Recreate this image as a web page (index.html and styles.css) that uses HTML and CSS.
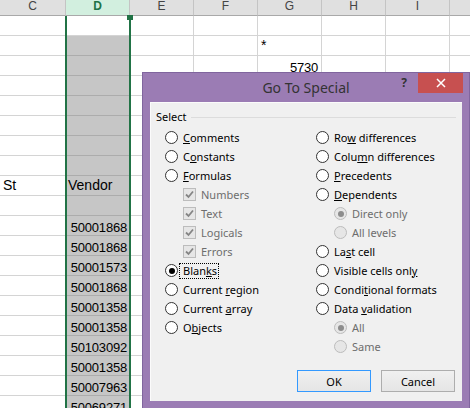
FILE: index.html
```html
<!DOCTYPE html>
<html>
<head>
<meta charset="utf-8">
<link rel="stylesheet" href="styles.css">
</head>
<body>
<div class="sheet">
  <div class="c h">C</div><div class="c h hd">D</div><div class="c h">E</div><div class="c h">F</div><div class="c h">G</div><div class="c h">H</div><div class="c h">I</div><div class="c h"></div>

  <div class="c"></div><div class="c"></div><div class="c"></div><div class="c"></div><div class="c"></div><div class="c"></div><div class="c"></div><div class="c"></div>
  <div class="c"></div><div class="c s"></div><div class="c"></div><div class="c"></div><div class="c pl">*</div><div class="c"></div><div class="c"></div><div class="c"></div>
  <div class="c"></div><div class="c s"></div><div class="c"></div><div class="c"></div><div class="c num">5730</div><div class="c"></div><div class="c"></div><div class="c"></div>
  <div class="c"></div><div class="c s"></div><div class="c"></div><div class="c"></div><div class="c"></div><div class="c"></div><div class="c"></div><div class="c"></div>
  <div class="c"></div><div class="c s"></div><div class="c"></div><div class="c"></div><div class="c"></div><div class="c"></div><div class="c"></div><div class="c"></div>
  <div class="c"></div><div class="c s"></div><div class="c"></div><div class="c"></div><div class="c"></div><div class="c"></div><div class="c"></div><div class="c"></div>
  <div class="c"></div><div class="c s"></div><div class="c"></div><div class="c"></div><div class="c"></div><div class="c"></div><div class="c"></div><div class="c"></div>
  <div class="c"></div><div class="c s"></div><div class="c"></div><div class="c"></div><div class="c"></div><div class="c"></div><div class="c"></div><div class="c"></div>
  <div class="c pl">St</div><div class="c s">Vendor</div><div class="c"></div><div class="c"></div><div class="c"></div><div class="c"></div><div class="c"></div><div class="c"></div>
  <div class="c"></div><div class="c s"></div><div class="c"></div><div class="c"></div><div class="c"></div><div class="c"></div><div class="c"></div><div class="c"></div>
  <div class="c"></div><div class="c s num">50001868</div><div class="c"></div><div class="c"></div><div class="c"></div><div class="c"></div><div class="c"></div><div class="c"></div>
  <div class="c"></div><div class="c s num">50001868</div><div class="c"></div><div class="c"></div><div class="c"></div><div class="c"></div><div class="c"></div><div class="c"></div>
  <div class="c"></div><div class="c s num">50001573</div><div class="c"></div><div class="c"></div><div class="c"></div><div class="c"></div><div class="c"></div><div class="c"></div>
  <div class="c"></div><div class="c s num">50001868</div><div class="c"></div><div class="c"></div><div class="c"></div><div class="c"></div><div class="c"></div><div class="c"></div>
  <div class="c"></div><div class="c s num">50001358</div><div class="c"></div><div class="c"></div><div class="c"></div><div class="c"></div><div class="c"></div><div class="c"></div>
  <div class="c"></div><div class="c s num">50001358</div><div class="c"></div><div class="c"></div><div class="c"></div><div class="c"></div><div class="c"></div><div class="c"></div>
  <div class="c"></div><div class="c s num">50103092</div><div class="c"></div><div class="c"></div><div class="c"></div><div class="c"></div><div class="c"></div><div class="c"></div>
  <div class="c"></div><div class="c s num">50001358</div><div class="c"></div><div class="c"></div><div class="c"></div><div class="c"></div><div class="c"></div><div class="c"></div>
  <div class="c"></div><div class="c s num">50007963</div><div class="c"></div><div class="c"></div><div class="c"></div><div class="c"></div><div class="c"></div><div class="c"></div>
  <div class="c"></div><div class="c s num">50069271</div><div class="c"></div><div class="c"></div><div class="c"></div><div class="c"></div><div class="c"></div><div class="c"></div>
</div>
<div class="selection"></div>
<div class="handle"></div>

<div class="dialog">
  <div class="titlebar">
    <div></div>
    <div class="title">Go To Special</div>
    <div class="controls">
      <span class="help">?</span>
      <span class="close"><svg width="10" height="10" viewBox="0 0 10 10"><path d="M1 1L9 9M9 1L1 9" stroke="#fff" stroke-width="1.5" fill="none"/></svg></span>
    </div>
  </div>
  <div class="panel">
    <div class="legend"><span>Select</span><span class="rule"></span></div>
    <div class="cols">
      <div class="col">
        <div class="opt"><span class="radio"></span><span class="lbl"><u>C</u>omments</span></div>
        <div class="opt"><span class="radio"></span><span class="lbl">C<u>o</u>nstants</span></div>
        <div class="opt"><span class="radio"></span><span class="lbl"><u>F</u>ormulas</span></div>
        <div class="opt sub dis"><span class="check"><svg width="11" height="11" viewBox="0 0 11 11"><path d="M2 5.5L4.5 8L9 2.5" stroke="#858585" stroke-width="1.8" fill="none"/></svg></span><span class="lbl">Numbers</span></div>
        <div class="opt sub dis"><span class="check"><svg width="11" height="11" viewBox="0 0 11 11"><path d="M2 5.5L4.5 8L9 2.5" stroke="#858585" stroke-width="1.8" fill="none"/></svg></span><span class="lbl">Text</span></div>
        <div class="opt sub dis"><span class="check"><svg width="11" height="11" viewBox="0 0 11 11"><path d="M2 5.5L4.5 8L9 2.5" stroke="#858585" stroke-width="1.8" fill="none"/></svg></span><span class="lbl">Logicals</span></div>
        <div class="opt sub dis"><span class="check"><svg width="11" height="11" viewBox="0 0 11 11"><path d="M2 5.5L4.5 8L9 2.5" stroke="#858585" stroke-width="1.8" fill="none"/></svg></span><span class="lbl">Errors</span></div>
        <div class="opt"><span class="radio on"></span><span class="lbl focus">Blan<u>k</u>s</span></div>
        <div class="opt"><span class="radio"></span><span class="lbl">Current <u>r</u>egion</span></div>
        <div class="opt"><span class="radio"></span><span class="lbl">Current <u>a</u>rray</span></div>
        <div class="opt"><span class="radio"></span><span class="lbl">O<u>b</u>jects</span></div>
      </div>
      <div class="col">
        <div class="opt"><span class="radio"></span><span class="lbl">Ro<u>w</u> differences</span></div>
        <div class="opt"><span class="radio"></span><span class="lbl">Colu<u>m</u>n differences</span></div>
        <div class="opt"><span class="radio"></span><span class="lbl"><u>P</u>recedents</span></div>
        <div class="opt"><span class="radio"></span><span class="lbl"><u>D</u>ependents</span></div>
        <div class="opt sub dis"><span class="radio on"></span><span class="lbl">Direct only</span></div>
        <div class="opt sub dis"><span class="radio"></span><span class="lbl">All levels</span></div>
        <div class="opt"><span class="radio"></span><span class="lbl">La<u>s</u>t cell</span></div>
        <div class="opt"><span class="radio"></span><span class="lbl">Visible cells onl<u>y</u></span></div>
        <div class="opt"><span class="radio"></span><span class="lbl">Condi<u>t</u>ional formats</span></div>
        <div class="opt"><span class="radio"></span><span class="lbl">Data <u>v</u>alidation</span></div>
        <div class="opt sub dis"><span class="radio on"></span><span class="lbl">All</span></div>
        <div class="opt sub dis"><span class="radio"></span><span class="lbl">Same</span></div>
      </div>
    </div>
    <div class="buttons">
      <button class="btn default">OK</button>
      <button class="btn">Cancel</button>
    </div>
  </div>
</div>
</body>
</html>
```
FILE: styles.css
```css
html, body {
  margin: 0;
  padding: 0;
}
body {
  width: 470px;
  height: 408px;
  overflow: hidden;
  position: relative;
  background: #fff;
  font-family: "Liberation Sans", Arial, sans-serif;
}
.sheet {
  display: grid;
  grid-template-columns: 66px repeat(7, 64px);
  grid-template-rows: 16px;
  grid-auto-rows: 20px;
  width: 514px;
}
.c {
  box-sizing: border-box;
  border-right: 1px solid #d4d4d4;
  border-bottom: 1px solid #d4d4d4;
  font-size: 14px;
  line-height: 19px;
  color: #000;
  white-space: nowrap;
  overflow: hidden;
  padding: 0 2px;
}
.c.pl {
  padding-left: 3px;
}
.c.num {
  font-size: 13px;
  letter-spacing: -0.2px;
  text-align: right;
  padding-top: 2px;
  padding-right: 3px;
}
.c.s.num {
  padding-right: 2px;
}
.c.s {
  background: #c6c6c6;
  border-bottom-color: #acacac;
  border-right-color: #acacac;
}
.c.h {
  background: #e0e0e0;
  border-right-color: #c4c4c4;
  border-bottom-color: #a9a9a9;
  font-size: 12px;
  line-height: 13px;
  text-align: center;
  color: #444;
}
.c.h.hd {
  background: #d2efdf;
  color: #217346;
  font-weight: bold;
}
.selection {
  position: absolute;
  left: 65px;
  top: 16px;
  width: 66px;
  bottom: 0;
  box-sizing: border-box;
  border-left: 2px solid #217346;
  border-right: 2px solid #217346;
}
.handle {
  position: absolute;
  left: 127px;
  top: 15px;
  width: 6px;
  height: 5px;
  background: #217346;
}

/* dialog */
.dialog {
  position: absolute;
  left: 142px;
  top: 72px;
  width: 328px;
  height: 337px;
  box-sizing: border-box;
  background: #9b7cb4;
  border: 1px solid #80659e;
  padding: 0 7px;
  font-family: "Noto Sans", "Open Sans", sans-serif;
  font-size: 11px;
  color: #000;
}
.titlebar {
  height: 29px;
  display: grid;
  grid-template-columns: 1fr auto 1fr;
}
.title {
  font-size: 14px;
  line-height: 29px;
  color: #333;
}
.controls {
  justify-self: end;
  display: flex;
  align-items: center;
  height: 20px;
  margin-right: -1px;
}
.help {
  font-size: 12px;
  font-weight: bold;
  color: #333;
  margin-right: 11px;
  line-height: 12px;
}
.close {
  width: 45px;
  height: 20px;
  background: #c75050;
  display: flex;
  align-items: center;
  justify-content: center;
}
.close svg {
  display: block;
}
.panel {
  height: 299px;
  box-sizing: border-box;
  background: #f0f0f0;
  box-shadow: inset 1px 1px 0 #fbfbfb;
  padding-top: 7px;
}
.legend {
  display: flex;
  align-items: center;
  height: 16px;
  padding: 0 6px;
  line-height: 16px;
}
.rule {
  flex: 1;
  height: 1px;
  background: #dcdcdc;
  margin-left: 4px;
}
.cols {
  display: grid;
  grid-template-columns: 151px 1fr;
  padding-left: 15px;
  margin-top: 3px;
}
.opt {
  display: flex;
  align-items: center;
  height: 19px;
}
.opt.sub {
  padding-left: 18px;
}
.radio {
  width: 13px;
  height: 13px;
  box-sizing: border-box;
  border: 1px solid #333;
  border-radius: 50%;
  background: #fff;
  display: flex;
  align-items: center;
  justify-content: center;
  flex: none;
}
.radio.on::after {
  content: "";
  width: 6px;
  height: 6px;
  border-radius: 50%;
  background: #000;
}
.dis .radio {
  border-color: #bcbcbc;
  background: #e6e6e6;
}
.dis .radio.on::after {
  background: #8d8d8d;
}
.check {
  width: 13px;
  height: 13px;
  box-sizing: border-box;
  border: 1px solid #bcbcbc;
  background: #e6e6e6;
  display: flex;
  align-items: center;
  justify-content: center;
  flex: none;
}
.check svg {
  display: block;
}
.lbl {
  margin-left: 5px;
  line-height: 16px;
  white-space: nowrap;
}
.dis .lbl {
  color: #6d6d6d;
}
.lbl.focus {
  margin-left: 1px;
  padding: 0 1px 0 3px;
  border: 1px dotted #000;
  line-height: 14px;
}
.buttons {
  display: flex;
  justify-content: flex-end;
  gap: 10px;
  padding-right: 7px;
  margin-top: 14px;
}
.btn {
  width: 74px;
  height: 22px;
  box-sizing: border-box;
  border: 1px solid #adadad;
  background: linear-gradient(#f0f0f0, #e5e5e5);
  font-family: "Noto Sans", "Open Sans", sans-serif;
  font-size: 11px;
  color: #000;
  padding: 0;
  margin: 0;
}
.btn.default {
  border-color: #3399ff;
}
```
